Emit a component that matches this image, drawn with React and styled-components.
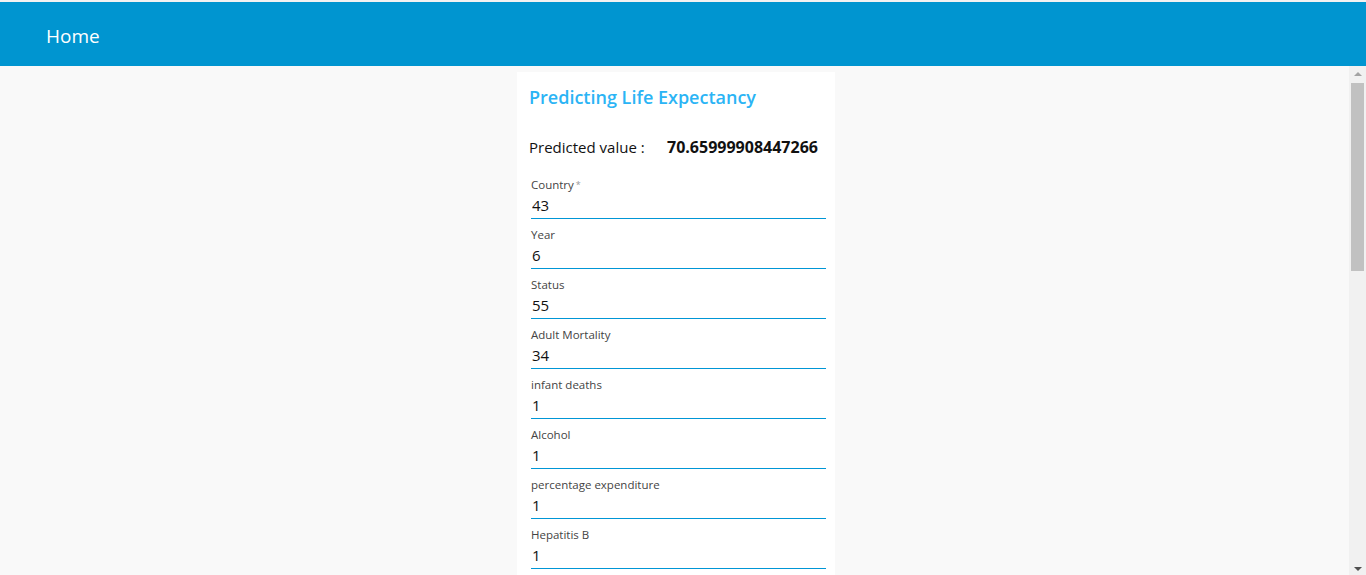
import React from "react";
import styled, { createGlobalStyle } from "styled-components";

const Global = createGlobalStyle`
  html, body { margin: 0; padding: 0; height: 100%; overflow: hidden; }
  body { font-family: "Open Sans", "Noto Sans", sans-serif; background: #ffffff; }
  #root { height: 100%; }
`;

const Page = styled.div`
  height: 100vh;
  display: flex;
  flex-direction: column;
  border-top: 2px solid #f2f2f2;
  box-sizing: border-box;
`;

const Header = styled.header`
  flex: 0 0 64px;
  background: #0095d0;
  display: flex;
  align-items: center;
  padding: 3px 0 0 46px;
  box-sizing: border-box;
  color: #ffffff;
  font-size: 19px;
`;

const Body = styled.div`
  flex: 1;
  position: relative;
  min-height: 0;
  display: flex;
`;

const Scroller = styled.main`
  flex: 1;
  overflow-y: auto;
  background: #f9f9f9;
  display: flex;
  justify-content: center;
  padding: 6px 17px 0 0;
  box-sizing: border-box;
  scrollbar-width: none;
  &::-webkit-scrollbar { display: none; }
`;

const Track = styled.div`
  position: absolute;
  top: 0;
  right: 0;
  bottom: 0;
  width: 17px;
  background: #f1f1f1;
`;

const Thumb = styled.div`
  position: absolute;
  top: 17px;
  left: 2px;
  width: 13px;
  height: 188px;
  background: #c1c1c1;
`;

const Arrow = styled.div`
  position: absolute;
  left: 5px;
  width: 0;
  height: 0;
  border-left: 4px solid transparent;
  border-right: 4px solid transparent;
  ${(p) =>
    p.$down
      ? `bottom: 4px; border-top: 4px solid #505050;`
      : `top: 6px; border-bottom: 4px solid #a3a3a3;`}
`;

const Card = styled.section`
  width: 318px;
  margin-left: 3px;
  background: #ffffff;
  padding: 12px 9px 20px 12px;
  box-sizing: border-box;
  align-self: flex-start;
`;

const Title = styled.h2`
  margin: 0;
  font-size: 18px;
  font-weight: 600;
  color: #2bb4f5;
  line-height: 26px;
`;

const Predicted = styled.div`
  display: flex;
  align-items: baseline;
  margin-top: 26px;
  font-size: 15px;
  color: #111;
  line-height: 22px;
`;

const PLabel = styled.span`
  width: 138px;
`;

const PValue = styled.span`
  font-weight: 700;
  font-size: 16px;
`;

const Fields = styled.div`
  margin-top: 16px;
  padding-left: 2px;
  display: flex;
  flex-direction: column;
`;

const Field = styled.label`
  display: flex;
  flex-direction: column;
  height: 50px;
  box-sizing: border-box;
  padding-top: 3px;
`;

const Label = styled.span`
  font-size: 11.5px;
  color: #444;
  line-height: 16px;
`;

const Req = styled.span`
  color: #999;
  font-size: 9px;
  vertical-align: top;
  margin-left: 2px;
`;

const InputWrap = styled.div`
  width: 295px;
  height: 26px;
  display: flex;
  flex-direction: column;
  &::after {
    content: "";
    display: block;
    height: 1px;
    background: #0096d6;
    margin-top: auto;
  }
`;

const Input = styled.input`
  border: none;
  outline: none;
  background: transparent;
  font-family: inherit;
  font-size: 15px;
  color: #111;
  padding: 0 0 0 1px;
  margin: 0;
  height: 24px;
  line-height: 22px;
  width: 100%;
  box-sizing: border-box;
`;

const fields = [
  ["Country", "43", true],
  ["Year", "6"],
  ["Status", "55"],
  ["Adult Mortality", "34"],
  ["infant deaths", "1"],
  ["Alcohol", "1"],
  ["percentage expenditure", "1"],
  ["Hepatitis B", "1"],
  ["Measles", "1"],
  ["BMI", "1"],
];

export default function App() {
  return (
    <Page>
      <Global />
      <Header>Home</Header>
      <Body>
        <Scroller>
          <Card>
            <Title>Predicting Life Expectancy</Title>
            <Predicted>
              <PLabel>Predicted value :</PLabel>
              <PValue>70.65999908447266</PValue>
            </Predicted>
            <Fields>
              {fields.map(([l, v, r]) => (
                <Field key={l}>
                  <Label>
                    {l}
                    {r && <Req>*</Req>}
                  </Label>
                  <InputWrap>
                    <Input defaultValue={v} />
                  </InputWrap>
                </Field>
              ))}
            </Fields>
          </Card>
        </Scroller>
        <Track>
          <Arrow />
          <Thumb />
          <Arrow $down />
        </Track>
      </Body>
    </Page>
  );
}
